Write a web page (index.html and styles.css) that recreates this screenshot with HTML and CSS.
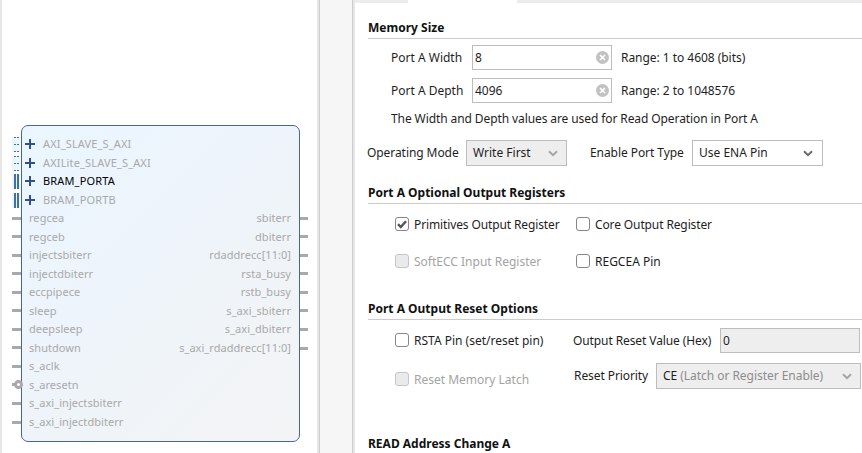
FILE: index.html
```
<!DOCTYPE html>
<html lang="en">
<head>
<meta charset="utf-8">
<title>Block Memory Generator</title>
<link rel="stylesheet" href="styles.css">
</head>
<body>
<main class="app">
  <section class="canvas">
    <div class="block">
      <ul class="ports inputs">
        <li class="bus"><svg class="pin dashed" viewBox="0 0 8 15"><path d="M2 .5h5M2 7.5h5M2 14.5h5"/></svg><i class="plus"></i>AXI_SLAVE_S_AXI</li>
        <li class="bus"><svg class="pin dashed" viewBox="0 0 8 15"><path d="M2 .5h5M2 7.5h5M2 14.5h5"/></svg><i class="plus"></i>AXILite_SLAVE_S_AXI</li>
        <li class="bus active"><i class="bars"></i><i class="plus"></i>BRAM_PORTA</li>
        <li class="bus"><i class="bars"></i><i class="plus"></i>BRAM_PORTB</li>
        <li>regcea</li>
        <li>regceb</li>
        <li>injectsbiterr</li>
        <li>injectdbiterr</li>
        <li>eccpipece</li>
        <li>sleep</li>
        <li>deepsleep</li>
        <li>shutdown</li>
        <li>s_aclk</li>
        <li class="inverted">s_aresetn</li>
        <li>s_axi_injectsbiterr</li>
        <li>s_axi_injectdbiterr</li>
      </ul>
      <ul class="ports outputs">
        <li>sbiterr</li>
        <li>dbiterr</li>
        <li>rdaddrecc[11:0]</li>
        <li>rsta_busy</li>
        <li>rstb_busy</li>
        <li>s_axi_sbiterr</li>
        <li>s_axi_dbiterr</li>
        <li>s_axi_rdaddrecc[11:0]</li>
      </ul>
    </div>
  </section>
  <div class="splitter"></div>
  <section class="settings">
    <div class="tabs"><span class="tab"></span></div>
    <div class="group memory">
      <h2>Memory Size</h2>
      <div class="field"><label>Port A Width</label><div class="input">8<svg class="clear" viewBox="0 0 13 13"><circle cx="6.5" cy="6.5" r="6.5"/><path d="M4 4l5 5M9 4l-5 5"/></svg></div><span>Range: 1 to 4608 (bits)</span></div>
      <div class="field"><label>Port A Depth</label><div class="input">4096<svg class="clear" viewBox="0 0 13 13"><circle cx="6.5" cy="6.5" r="6.5"/><path d="M4 4l5 5M9 4l-5 5"/></svg></div><span>Range: 2 to 1048576</span></div>
      <p>The Width and Depth values are used for Read Operation in Port A</p>
      <div class="modes">
        <label class="mode-label">Operating Mode</label><div class="select disabled">Write First<svg class="arrow" viewBox="0 0 10 7"><path d="M1 1.2l4 4 4-4"/></svg></div>
        <label class="type-label">Enable Port Type</label><div class="select wide">Use ENA Pin<svg class="arrow" viewBox="0 0 10 7"><path d="M1 1.2l4 4 4-4"/></svg></div>
      </div>
    </div>
    <div class="group registers">
      <h2>Port A Optional Output Registers</h2>
      <div class="checks">
        <label class="check tight"><span class="box"><svg viewBox="0 0 14 14"><path d="M3 7.2l2.8 2.8L11 4.2"/></svg></span>Primitives Output Register</label>
        <label class="check tight"><span class="box"></span>Core Output Register</label>
        <label class="check off"><span class="box"></span>SoftECC Input Register</label>
        <label class="check"><span class="box"></span>REGCEA Pin</label>
      </div>
    </div>
    <div class="group reset">
      <h2>Port A Output Reset Options</h2>
      <div class="columns">
        <div class="left-col">
          <label class="check"><span class="box"></span>RSTA Pin (set/reset pin)</label>
          <label class="check off"><span class="box"></span>Reset Memory Latch</label>
        </div>
        <div class="right-col">
          <div class="line"><label class="hex-label">Output Reset Value (Hex)</label><div class="input disabled">0</div></div>
          <div class="line"><label class="priority-label">Reset Priority</label><div class="select disabled priority"><span>CE <em>(Latch or Register Enable)</em></span><svg class="arrow" viewBox="0 0 10 7"><path d="M1 1.2l4 4 4-4"/></svg></div></div>
        </div>
      </div>
    </div>
    <div class="group read"><h2>READ Address Change A</h2></div>
  </section>
</main>
</body>
</html>
```
FILE: styles.css
```
*, *::before, *::after { box-sizing: border-box; }
body { margin: 0; background: #fff; color: #1e1e1e; font: 12px/16px "Noto Sans", sans-serif; overflow: hidden; }
h2, p, ul { margin: 0; padding: 0; }
.app { display: flex; width: 862px; height: 453px; overflow: hidden; white-space: nowrap; }

.canvas { width: 317px; border-left: 2px solid #e6e6e6; padding: 125px 0 0 19px; }
.block { width: 279px; height: 317px; border: 1px solid #4265a8; border-radius: 7px; padding: 9.2px 8px 0 7px; background: linear-gradient(135deg, #eaf6fe 0%, #eef4fc 40%, #eff4f8 60%, #f4f4f6 100%); display: flex; justify-content: space-between; color: #a9a9a9; font-size: 11px; letter-spacing: .05px; }
.ports { list-style: none; }
.ports li { position: relative; height: 18.53px; line-height: 18.53px; }
.outputs { padding-top: 74.12px; text-align: right; }
.ports li:not(.bus)::before { content: ""; position: absolute; top: 7.6px; left: -17px; width: 9px; height: 3px; background: #a9a9a9; }
.ports.outputs li::before { left: auto; right: -17px; width: 8px; }
.ports .inverted::after { content: ""; position: absolute; left: -15px; top: 4.6px; width: 9px; height: 9px; border: 3px solid #a9a9a9; border-radius: 50%; background: #fff; }
.ports .bus { padding-left: 14px; letter-spacing: .15px; }
.ports .active { color: #000; }
.plus { position: absolute; left: -4px; top: 4px; width: 10px; height: 10px; background: linear-gradient(#304f8c, #304f8c) center / 10px 2px no-repeat, linear-gradient(#304f8c, #304f8c) center / 2px 10px no-repeat; }
.pin { position: absolute; left: -17px; top: 2px; width: 8px; height: 15px; background: #eaf6fe; }
.pin path { stroke: #416fa6; stroke-dasharray: 2 1; }
.bars { position: absolute; left: -17px; top: 2px; width: 8px; height: 15px; background: linear-gradient(90deg, #eaf6fe 2px, #416fa6 2px 4px, #eaf6fe 4px 5px, #416fa6 5px 7px, #eaf6fe 7px); }

.splitter { width: 38px; background: #f6f6f6; border: solid #e6e6e6; border-width: 0 2px; box-shadow: inset 1px 0 #ccc, inset -1px 0 #ccc; }
.settings { flex: 1; min-width: 0; }
.tabs { height: 3px; background: #ececec; padding-left: 53px; display: flex; }
.tab { width: 109px; background: #fff; }
.group { padding-left: 13px; }
h2 { font-size: 12px; font-weight: 700; line-height: 16px; height: 19px; color: #111; border-bottom: 1px solid #ccc; }
.memory { padding-top: 17px; height: 182px; }
.field { display: flex; align-items: center; height: 25px; margin: 6px 0 8px 23px; }
.field + .field { margin-top: 0; }
.field label { width: 81px; }
.input { width: 140px; height: 25px; border: 1px solid #bdbdbd; background: #fff; padding: 0 2px; display: flex; align-items: center; justify-content: space-between; }
.field span { margin-left: 9px; letter-spacing: -.04px; }
.clear { width: 13px; height: 13px; }
.clear circle { fill: #c2c2c2; }
.clear path { stroke: #fff; stroke-width: 1.7; }
.memory p { margin: 0 0 0 23px; height: 16px; letter-spacing: -.095px; }
.modes { display: flex; align-items: center; height: 26px; margin: 13px 0 0 -1px; }
.mode-label { width: 99px; letter-spacing: -.07px; }
.type-label { width: 102px; margin-left: 23px; letter-spacing: -.07px; }
.select { width: 101px; height: 26px; border: 1px solid #bdbdbd; background: #fff; padding: 0 8px 0 6px; display: flex; align-items: center; justify-content: space-between; }
.select.wide { width: 131px; padding-right: 9px; }
.disabled { background: #eee; }
.arrow { width: 10px; height: 7px; }
.arrow path { fill: none; stroke: #686868; stroke-width: 2; }
.disabled .arrow path { stroke: #a5a5a5; }
.registers { height: 116px; }
.checks { display: grid; grid-template-columns: 181px 1fr; row-gap: 21px; padding: 13px 0 0 27px; }
.check { display: flex; align-items: center; gap: 5px; height: 16px; }
.tight { letter-spacing: -.12px; }
.box { width: 14px; height: 14px; border: 1px solid #858585; border-radius: 3px; background: #fff; display: flex; position: relative; top: -.6px; }
.box svg { width: 14px; height: 14px; margin: -1px; flex: none; }
.box path { fill: none; stroke: #555; stroke-width: 2.4; }
.off { color: #a3a3a3; }
.off .box { border-color: #c6c6c6; background: #e9eaec; }
.reset { height: 135px; }
.columns { display: flex; padding: 8px 0 0 27px; }
.left-col { width: 178px; padding-top: 5px; }
.left-col .check + .check { margin-top: 23px; }
.line { display: flex; align-items: center; height: 25px; }
.line + .line { height: 26px; margin: 10px 0 0 1px; }
.hex-label { width: 147px; letter-spacing: -.1px; }
.priority-label { width: 82px; letter-spacing: -.08px; }
.priority { width: 205px; }
.priority span { letter-spacing: -.04px; }
.priority em { font-style: normal; color: #8d8d8d; }
.read h2 { border: 0; }
```
